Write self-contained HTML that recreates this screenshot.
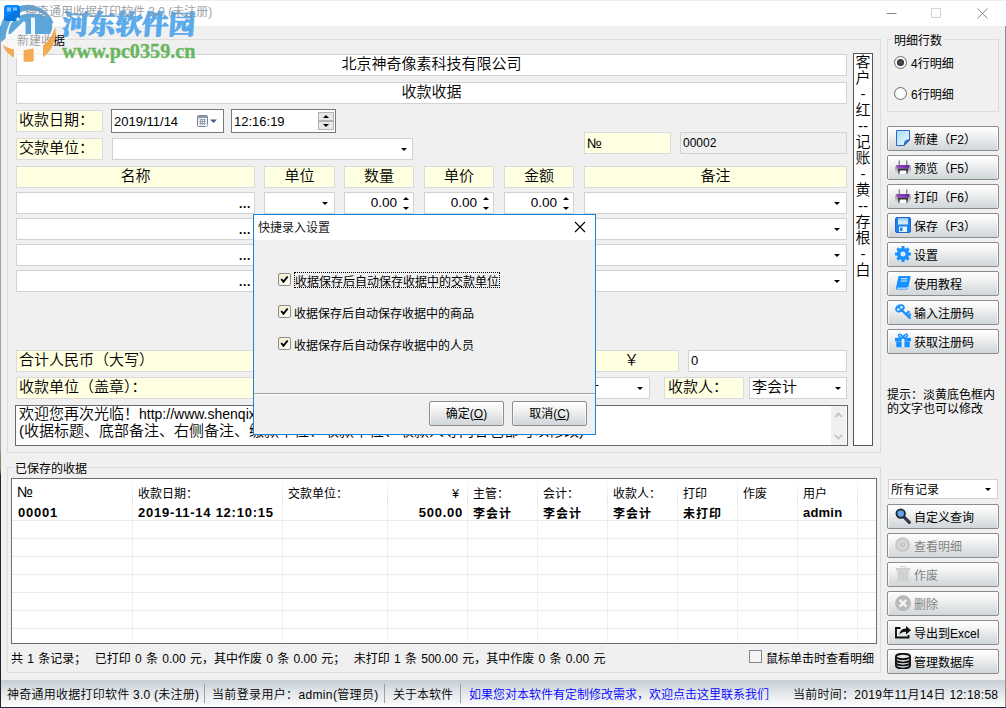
<!DOCTYPE html>
<html lang="zh-CN">
<head>
<meta charset="utf-8">
<title>神奇通用收据打印软件 3.0 (未注册)</title>
<style>
*{box-sizing:border-box;margin:0;padding:0}
html,body{width:1006px;height:708px;overflow:hidden;background:#f0f0f0}
body{position:relative;font-family:"Liberation Sans","Noto Sans CJK SC",sans-serif;font-size:12px;color:#000;line-height:1}
.a{position:absolute;white-space:nowrap}
/* 15px form font (SimSun-like) */
.f15{font-size:15px;font-weight:350;line-height:17px}
.f12{font-size:12px;line-height:14px}
.f13{font-size:13px;line-height:15px}
.yl{background:#ffffe1;border:1px solid #dadada}
.wf{background:#fff;border:1px solid #d2d2d2}
.df{background:#fff;border:1px solid #7a7a7a}
.c{text-align:center}
.r{text-align:right}
.grp{border:1px solid #dcdcdc}
.btn{border:1px solid #8c8c8c;border-radius:2px;background:linear-gradient(#ffffff 0%,#f1f2f2 35%,#dfe2e4 70%,#d0d6da 100%);box-shadow:inset -1px 0 0 rgba(255,255,255,.7),inset 1px 0 0 rgba(255,255,255,.7);height:25px;width:112px;left:887px}
.btn .t{position:absolute;left:26px;top:6px;font-size:12px;line-height:14px}
.btn svg{position:absolute;left:7px;top:3px;width:16px;height:16px}
.btn.dis .t{color:#838383}
.arr{width:0;height:0;border-left:3px solid transparent;border-right:3px solid transparent;border-top:3px solid #000}
.sp{width:6px;height:13px}
.sp:before,.sp:after{content:"";position:absolute;left:0;width:0;height:0;border-left:3px solid transparent;border-right:3px solid transparent}
.sp:before{top:0;border-bottom:3px solid #000}
.sp:after{top:10px;border-top:3px solid #000}
.b{font-weight:700}
.bl{font-size:13px;letter-spacing:.75px}
.cb{width:13px;height:13px}
.dots{font-size:12px;font-weight:700;letter-spacing:.7px}
</style>
</head>
<body>
<!-- ======= title bar ======= -->
<div class="a" id="titlebar" style="left:0;top:0;width:1006px;height:26px;background:#fff"></div>
<div class="a" id="topstrip" style="left:0;top:0;width:1006px;height:1px;background:#eeeeee"></div>
<div class="a" style="left:1005px;top:26px;width:1px;height:682px;background:#8c8c8c"></div>
<div class="a" style="left:0;top:26px;width:1px;height:682px;background:linear-gradient(#a0a0a0 0,#a0a0a0 62%,#8c8468 63%,#8c8468 65%,#1c2333 66%,#1c2333 100%)"></div>
<!-- window controls -->
<svg class="a" style="left:880px;top:0;width:126px;height:26px" viewBox="0 0 126 26">
  <path d="M6.500 13.500h10" stroke="#8a8a8a" stroke-width="1" fill="none"/>
  <rect x="51.5" y="8.5" width="9" height="9" stroke="#d4d4d4" stroke-width="1" fill="none"/>
  <path d="M97.5 8.5l10 10M107.5 8.5l-10 10" stroke="#8a8a8a" stroke-width="1" fill="none"/>
</svg>

<!-- ======= group: 新建收据 ======= -->
<div class="a grp" style="left:7px;top:39px;width:874px;height:414px"></div>
<div class="a f12" style="left:15px;top:34px;padding:0 2px;background:#f0f0f0">新建收据</div>

<div class="a wf f15 c" style="left:16px;top:54px;width:831px;height:22px">北京神奇像素科技有限公司</div>
<div class="a wf f15 c" style="left:16px;top:82px;width:831px;height:22px">收款收据</div>

<div class="a yl f15" style="left:16px;top:110px;width:87px;height:22px;padding-left:2px">收款日期：</div>
<div class="a df f13" style="left:111px;top:109px;width:113px;height:24px;padding:4px 0 0 2px">2019/11/14</div>
<svg class="a" style="left:197px;top:115px;width:22px;height:13px" viewBox="0 0 22 13"><rect x="0.5" y="0.5" width="10" height="11" rx="1" fill="#eef0f4" stroke="#7b8594"/><rect x="1" y="1" width="9" height="2" fill="#8c97a8"/><path d="M2.5 4.5h6M2.5 6.5h6M2.5 8.5h6M3.5 4v6M5.5 4v6M7.5 4v6" stroke="#9aa3b2" stroke-width="1" fill="none"/><path d="M8 12l3-3v3z" fill="#c9ced8"/><path d="M13 4.5h7l-3.5 3.5z" fill="#3e5f8f"/></svg>
<div class="a df f13" style="left:231px;top:109px;width:105px;height:24px;padding:4px 0 0 2px">12:16:19</div>
<div class="a" style="left:318px;top:112px;width:16px;height:9px;background:#e8e8e8;border:1px solid #b4b4b4"></div>
<div class="a" style="left:318px;top:121px;width:16px;height:9px;background:#e8e8e8;border:1px solid #b4b4b4"></div>
<div class="a" style="left:323px;top:115px;width:0;height:0;border-left:3px solid transparent;border-right:3px solid transparent;border-bottom:3px solid #000"></div>
<div class="a" style="left:323px;top:124px;width:0;height:0;border-left:3px solid transparent;border-right:3px solid transparent;border-top:3px solid #000"></div>

<div class="a yl f15" style="left:16px;top:138px;width:87px;height:22px;padding-left:2px">交款单位：</div>
<div class="a wf" style="left:112px;top:138px;width:301px;height:22px"></div>
<div class="a arr" style="left:401px;top:148px"></div>

<div class="a yl f13" style="left:584px;top:132px;width:87px;height:22px;padding:3px 0 0 2px;font-size:14px">№</div>
<div class="a f12" style="left:680px;top:132px;width:167px;height:22px;padding:3px 0 0 2px;background:#f0f0f0;border:1px solid #d2d2d2">00002</div>

<!-- header row -->
<div class="a yl f15 c" style="left:16px;top:166px;width:239px;height:22px">名称</div>
<div class="a yl f15 c" style="left:264px;top:166px;width:71px;height:22px">单位</div>
<div class="a yl f15 c" style="left:344px;top:166px;width:70px;height:22px">数量</div>
<div class="a yl f15 c" style="left:424px;top:166px;width:70px;height:22px">单价</div>
<div class="a yl f15 c" style="left:504px;top:166px;width:70px;height:22px">金额</div>
<div class="a yl f15 c" style="left:584px;top:166px;width:263px;height:22px">备注</div>

<!-- detail rows -->
<div id="rows">
<div class="a wf" style="left:16px;top:192px;width:239px;height:22px"></div>
<div class="a dots" style="left:239px;top:198px">...</div>
<div class="a wf" style="left:264px;top:192px;width:71px;height:22px"></div><div class="a arr" style="left:322px;top:202px"></div>
<div class="a wf f13 r" style="left:344px;top:192px;width:70px;height:22px;padding:2px 16px 0 0;font-size:13.5px">0.00</div><div class="a sp" style="left:403px;top:197px"></div>
<div class="a wf f13 r" style="left:424px;top:192px;width:70px;height:22px;padding:2px 16px 0 0;font-size:13.5px">0.00</div><div class="a sp" style="left:483px;top:197px"></div>
<div class="a wf f13 r" style="left:504px;top:192px;width:70px;height:22px;padding:2px 16px 0 0;font-size:13.5px">0.00</div><div class="a sp" style="left:563px;top:197px"></div>
<div class="a wf" style="left:584px;top:192px;width:263px;height:22px"></div><div class="a arr" style="left:834px;top:202px"></div>
<div class="a wf" style="left:16px;top:218px;width:239px;height:22px"></div>
<div class="a dots" style="left:239px;top:224px">...</div>
<div class="a wf" style="left:264px;top:218px;width:71px;height:22px"></div><div class="a arr" style="left:322px;top:228px"></div>
<div class="a wf f13 r" style="left:344px;top:218px;width:70px;height:22px;padding:2px 16px 0 0;font-size:13.5px">0.00</div><div class="a sp" style="left:403px;top:223px"></div>
<div class="a wf f13 r" style="left:424px;top:218px;width:70px;height:22px;padding:2px 16px 0 0;font-size:13.5px">0.00</div><div class="a sp" style="left:483px;top:223px"></div>
<div class="a wf f13 r" style="left:504px;top:218px;width:70px;height:22px;padding:2px 16px 0 0;font-size:13.5px">0.00</div><div class="a sp" style="left:563px;top:223px"></div>
<div class="a wf" style="left:584px;top:218px;width:263px;height:22px"></div><div class="a arr" style="left:834px;top:228px"></div>
<div class="a wf" style="left:16px;top:244px;width:239px;height:22px"></div>
<div class="a dots" style="left:239px;top:250px">...</div>
<div class="a wf" style="left:264px;top:244px;width:71px;height:22px"></div><div class="a arr" style="left:322px;top:254px"></div>
<div class="a wf f13 r" style="left:344px;top:244px;width:70px;height:22px;padding:2px 16px 0 0;font-size:13.5px">0.00</div><div class="a sp" style="left:403px;top:249px"></div>
<div class="a wf f13 r" style="left:424px;top:244px;width:70px;height:22px;padding:2px 16px 0 0;font-size:13.5px">0.00</div><div class="a sp" style="left:483px;top:249px"></div>
<div class="a wf f13 r" style="left:504px;top:244px;width:70px;height:22px;padding:2px 16px 0 0;font-size:13.5px">0.00</div><div class="a sp" style="left:563px;top:249px"></div>
<div class="a wf" style="left:584px;top:244px;width:263px;height:22px"></div><div class="a arr" style="left:834px;top:254px"></div>
<div class="a wf" style="left:16px;top:270px;width:239px;height:22px"></div>
<div class="a dots" style="left:239px;top:276px">...</div>
<div class="a wf" style="left:264px;top:270px;width:71px;height:22px"></div><div class="a arr" style="left:322px;top:280px"></div>
<div class="a wf f13 r" style="left:344px;top:270px;width:70px;height:22px;padding:2px 16px 0 0;font-size:13.5px">0.00</div><div class="a sp" style="left:403px;top:275px"></div>
<div class="a wf f13 r" style="left:424px;top:270px;width:70px;height:22px;padding:2px 16px 0 0;font-size:13.5px">0.00</div><div class="a sp" style="left:483px;top:275px"></div>
<div class="a wf f13 r" style="left:504px;top:270px;width:70px;height:22px;padding:2px 16px 0 0;font-size:13.5px">0.00</div><div class="a sp" style="left:563px;top:275px"></div>
<div class="a wf" style="left:584px;top:270px;width:263px;height:22px"></div><div class="a arr" style="left:834px;top:280px"></div>
</div>

<!-- totals -->
<div class="a yl f15" style="left:16px;top:350px;width:560px;height:22px;padding-left:2px">合计人民币（大写）</div>
<div class="a yl f15 c" style="left:584px;top:350px;width:95px;height:22px">￥</div>
<div class="a wf f13" style="left:688px;top:350px;width:159px;height:22px;padding:2px 0 0 2px">0</div>

<div class="a yl f15" style="left:16px;top:377px;width:560px;height:22px;padding-left:2px">收款单位（盖章）：</div>
<div class="a wf f15" style="left:551px;top:377px;width:99px;height:22px;padding-left:2px">李会计</div>
<div class="a arr" style="left:637px;top:387px"></div>
<div class="a yl f15" style="left:664px;top:377px;width:80px;height:22px;padding-left:3px">收款人：</div>
<div class="a wf f15" style="left:749px;top:377px;width:98px;height:22px;padding-left:2px">李会计</div>
<div class="a arr" style="left:835px;top:387px"></div>

<!-- notes -->
<div class="a" style="left:15px;top:405px;width:833px;height:41px;background:#fff;border:1px solid #696969"></div>
<div class="a f15" style="left:19px;top:406px;line-height:15px">欢迎您再次光临！<span style="font-size:14px;font-weight:400">http://www.shenqixiangsu.com</span></div>
<div class="a f15" style="left:19px;top:423px;line-height:15px">(收据标题、底部备注、右侧备注、缴款单位、收款单位、收款人等内容也都可以修改)</div>
<div class="a" style="left:831px;top:406px;width:15px;height:39px;background:#f0f0f0"></div>
<svg class="a" style="left:831px;top:406px;width:15px;height:39px" viewBox="0 0 15 39"><path d="M4 11l3.5-3.5 3.5 3.5M4 29l3.5 3.5 3.5-3.5" stroke="#bfbfbf" stroke-width="1.6" fill="none"/></svg>

<!-- vertical side note -->
<div class="a f15 c" style="left:853px;top:53px;width:20px;height:393px;background:#fff;border:1px solid #555;line-height:16px;padding-top:0px">客<br>户<br>-<br>红<br>--<br>记<br>账<br>-<br>黄<br>--<br>存<br>根<br>-<br>白</div>

<!-- ======= right panel ======= -->
<div class="a grp" style="left:887px;top:39px;width:112px;height:73px"></div>
<div class="a f12" style="left:892px;top:34px;padding:0 2px;background:#f0f0f0">明细行数</div>
<div class="a" style="left:894px;top:56px;width:13px;height:13px;border-radius:50%;border:1px solid #6f6f6f;background:radial-gradient(#fff 40%,#e4e4e4)"></div>
<div class="a" style="left:897px;top:59px;width:7px;height:7px;border-radius:50%;background:radial-gradient(#555,#1c1c1c)"></div>
<div class="a f12" style="left:911px;top:57px">4行明细</div>
<div class="a" style="left:894px;top:87px;width:13px;height:13px;border-radius:50%;border:1px solid #6f6f6f;background:radial-gradient(#fff 40%,#e4e4e4)"></div>
<div class="a f12" style="left:911px;top:88px">6行明细</div>

<div class="a btn" style="top:126px"><svg viewBox="0 0 16 16"><defs><linearGradient id="gnew" x1="0" y1="0" x2="1" y2="1"><stop offset="0" stop-color="#9fdcfb"/><stop offset="1" stop-color="#f2fbff"/></linearGradient></defs><path d="M1.5 0.5h13v9.5l-5.5 5.5h-7.5z" fill="url(#gnew)" stroke="#2b66c4"/><path d="M14.5 10c-2.5 0-4 .3-4.300 1.200c-.6 1-.8 2.300-1.200 4.300z" fill="#2f7fe0" stroke="#2456b0" stroke-width=".8"/></svg><span class="t">新建（F2）</span></div>
<div class="a btn" style="top:155px"><svg viewBox="0 0 16 16"><defs><linearGradient id="gpr1" x1="1" y1="0" x2="0" y2="1"><stop offset="0" stop-color="#5a109c"/><stop offset="1" stop-color="#a860d6"/></linearGradient><linearGradient id="gpb1" x1="0" y1="0" x2="0" y2="1"><stop offset="0" stop-color="#8e8e8e"/><stop offset="1" stop-color="#d2d2d2"/></linearGradient></defs><rect x="3.700" y=".5" width="8.600" height="6" fill="#f3f3f3"/><path d="M4.200 1.500v5M11.800 1.500v5" stroke="#5c5c5c" stroke-width="1"/><path d="M0 9.500c0-2.500 1.200-3.500 3-3.500h10c1.800 0 3 1 3 3.500c0 2.800-.8 4.500-2.600 4.500h-10.800c-1.800 0-2.600-1.700-2.600-4.500z" fill="url(#gpb1)"/><path d="M1.200 6.200h13.600l-1.200 3.500h-11.200z" fill="url(#gpr1)"/><path d="M2.800 9.700h10.400l-.9 5.500h-8.600z" fill="#333"/><path d="M4.800 11.500h6.400l.5 4h-7.400z" fill="#fbfbfb"/></svg><span class="t">预览（F5）</span></div>
<div class="a btn" style="top:184px"><svg viewBox="0 0 16 16"><defs><linearGradient id="gpr2" x1="1" y1="0" x2="0" y2="1"><stop offset="0" stop-color="#5a109c"/><stop offset="1" stop-color="#a860d6"/></linearGradient><linearGradient id="gpb2" x1="0" y1="0" x2="0" y2="1"><stop offset="0" stop-color="#8e8e8e"/><stop offset="1" stop-color="#d2d2d2"/></linearGradient></defs><rect x="3.700" y=".5" width="8.600" height="6" fill="#f3f3f3"/><path d="M4.200 1.500v5M11.800 1.500v5" stroke="#5c5c5c" stroke-width="1"/><path d="M0 9.500c0-2.500 1.200-3.500 3-3.500h10c1.800 0 3 1 3 3.500c0 2.800-.8 4.500-2.600 4.500h-10.800c-1.800 0-2.600-1.700-2.600-4.500z" fill="url(#gpb2)"/><path d="M1.200 6.200h13.600l-1.200 3.500h-11.200z" fill="url(#gpr2)"/><path d="M2.800 9.700h10.400l-.9 5.500h-8.600z" fill="#333"/><path d="M4.800 11.500h6.400l.5 4h-7.400z" fill="#fbfbfb"/></svg><span class="t">打印（F6）</span></div>
<div class="a btn" style="top:213px"><svg viewBox="0 0 16 16"><rect x=".5" y=".5" width="15" height="15" rx="1.500" fill="#1c83ea" stroke="#2467c9"/><rect x="3" y="1.500" width="10" height="6" fill="#cfeafc"/><rect x="3" y="1.500" width="10" height="2" fill="#9fd4f8"/><rect x="4" y="9.500" width="8" height="5.500" fill="#e8f4fd"/><rect x="5" y="10.500" width="2.500" height="3.500" fill="#1c83ea"/></svg><span class="t">保存（F3）</span></div>
<div class="a btn" style="top:242px"><svg viewBox="0 0 16 16"><path d="M6.44 2.10 L6.54 0.03 L9.46 0.03 L9.56 2.10 L11.06 2.73 L12.61 1.34 L14.66 3.39 L13.27 4.94 L13.90 6.44 L15.97 6.54 L15.97 9.46 L13.90 9.56 L13.27 11.06 L14.66 12.61 L12.61 14.66 L11.06 13.27 L9.56 13.90 L9.46 15.97 L6.54 15.97 L6.44 13.90 L4.94 13.27 L3.39 14.66 L1.34 12.61 L2.73 11.06 L2.10 9.56 L0.03 9.46 L0.03 6.54 L2.10 6.44 L2.73 4.94 L1.34 3.39 L3.39 1.34 L4.94 2.73Z" fill="#1890ff"/><circle cx="8" cy="8" r="2.500" fill="#e9f1f8"/><circle cx="8" cy="8" r="1.200" fill="#cfe4fa"/></svg><span class="t">设置</span></div>
<div class="a btn" style="top:271px"><svg viewBox="0 0 16 16"><path d="M4.300 1h10.200c.8 0 1.200.6 1 1.400l-2.400 10.600c-.2.900-.8 1.500-1.700 1.500h-9.400c-.9 0-1.200-.7-1-1.500l2-9.800c.2-1.200.5-2.200 1.300-2.200z" fill="#1890ff"/><path d="M6 3.700h6.500M5.600 6h6.500" stroke="#dff0ff" stroke-width="1.100"/><path d="M2.200 13.200h9.800l.6-1.200" stroke="#e8f4ff" stroke-width="1" fill="none"/></svg><span class="t">使用教程</span></div>
<div class="a btn" style="top:300px"><svg viewBox="0 0 16 16"><path d="M7.500 7l7.300 7M11 10.500l2.600-2.600M13.200 12.600l2.200-2.200" stroke="#1890ff" stroke-width="2.300" fill="none" stroke-linecap="round"/><ellipse cx="5" cy="4.300" rx="5" ry="3.900" transform="rotate(-28 5 4.300)" fill="#1890ff"/><circle cx="3.300" cy="5.500" r="1.350" fill="#e6eef6"/><circle cx="6.400" cy="3.300" r="1.350" fill="#e6eef6"/></svg><span class="t">输入注册码</span></div>
<div class="a btn" style="top:329px"><svg viewBox="0 0 16 16"><path d="M8 4.500c-1-3.500-4.500-4-4.500-2s2.500 2 4.500 2zM8 4.500c1-3.500 4.500-4 4.500-2s-2.500 2-4.500 2z" fill="none" stroke="#1890ff" stroke-width="1.500"/><rect x="0" y="4.800" width="16" height="3.600" fill="#1890ff"/><rect x="1.200" y="8.400" width="13.600" height="5.800" rx=".6" fill="#1890ff"/><rect x="6.600" y="5.800" width="2.800" height="8.400" fill="#e6eef6"/></svg><span class="t">获取注册码</span></div>

<div class="a f12" style="left:887px;top:388px;line-height:14px;white-space:normal;width:115px">提示：淡黄底色框内的文字也可以修改</div>

<!-- ======= group: 已保存的收据 ======= -->
<div class="a grp" style="left:7px;top:467px;width:874px;height:206px"></div>
<div class="a f12" style="left:13px;top:462px;padding:0 2px;background:#f0f0f0">已保存的收据</div>
<div class="a" id="grid" style="left:11px;top:478px;width:866px;height:166px;background:#fff;border:1px solid #6d6d6d">
<div class="a" style="left:120px;top:0;width:1px;height:24px;background:linear-gradient(#fff,#e3e3e3)"></div>
<div class="a" style="left:120px;top:24px;width:1px;height:139px;background:#f0f0f0"></div>
<div class="a" style="left:270px;top:0;width:1px;height:24px;background:linear-gradient(#fff,#e3e3e3)"></div>
<div class="a" style="left:270px;top:24px;width:1px;height:139px;background:#f0f0f0"></div>
<div class="a" style="left:375px;top:0;width:1px;height:24px;background:linear-gradient(#fff,#e3e3e3)"></div>
<div class="a" style="left:375px;top:24px;width:1px;height:139px;background:#f0f0f0"></div>
<div class="a" style="left:455px;top:0;width:1px;height:24px;background:linear-gradient(#fff,#e3e3e3)"></div>
<div class="a" style="left:455px;top:24px;width:1px;height:139px;background:#f0f0f0"></div>
<div class="a" style="left:525px;top:0;width:1px;height:24px;background:linear-gradient(#fff,#e3e3e3)"></div>
<div class="a" style="left:525px;top:24px;width:1px;height:139px;background:#f0f0f0"></div>
<div class="a" style="left:595px;top:0;width:1px;height:24px;background:linear-gradient(#fff,#e3e3e3)"></div>
<div class="a" style="left:595px;top:24px;width:1px;height:139px;background:#f0f0f0"></div>
<div class="a" style="left:665px;top:0;width:1px;height:24px;background:linear-gradient(#fff,#e3e3e3)"></div>
<div class="a" style="left:665px;top:24px;width:1px;height:139px;background:#f0f0f0"></div>
<div class="a" style="left:725px;top:0;width:1px;height:24px;background:linear-gradient(#fff,#e3e3e3)"></div>
<div class="a" style="left:725px;top:24px;width:1px;height:139px;background:#f0f0f0"></div>
<div class="a" style="left:785px;top:0;width:1px;height:24px;background:linear-gradient(#fff,#e3e3e3)"></div>
<div class="a" style="left:785px;top:24px;width:1px;height:139px;background:#f0f0f0"></div>
<div class="a" style="left:845px;top:0;width:1px;height:24px;background:linear-gradient(#fff,#e3e3e3)"></div>
<div class="a" style="left:845px;top:24px;width:1px;height:139px;background:#f0f0f0"></div>
<div class="a" style="left:0;top:41px;width:864px;height:1px;background:#ececec"></div>
<div class="a" style="left:0;top:59px;width:864px;height:1px;background:#ececec"></div>
<div class="a" style="left:0;top:77px;width:864px;height:1px;background:#ececec"></div>
<div class="a" style="left:0;top:95px;width:864px;height:1px;background:#ececec"></div>
<div class="a" style="left:0;top:113px;width:864px;height:1px;background:#ececec"></div>
<div class="a" style="left:0;top:131px;width:864px;height:1px;background:#ececec"></div>
<div class="a" style="left:0;top:149px;width:864px;height:1px;background:#ececec"></div>
<div class="a f12" style="left:5px;top:5px;font-size:15px;line-height:15px">№</div>
<div class="a f12" style="left:126px;top:8px">收款日期：</div>
<div class="a f12" style="left:276px;top:8px">交款单位：</div>
<div class="a f12" style="right:417px;top:8px">¥</div>
<div class="a f12" style="left:461px;top:8px">主管：</div>
<div class="a f12" style="left:531px;top:8px">会计：</div>
<div class="a f12" style="left:601px;top:8px">收款人：</div>
<div class="a f12" style="left:671px;top:8px">打印</div>
<div class="a f12" style="left:731px;top:8px">作废</div>
<div class="a f12" style="left:791px;top:8px">用户</div>
<div class="a f12 b bl" style="left:6px;top:27px">00001</div>
<div class="a f12 b bl" style="left:126px;top:27px">2019-11-14 12:10:15</div>
<div class="a f12 b bl" style="right:413px;top:27px">500.00</div>
<div class="a f12 b" style="left:461px;top:28px;letter-spacing:1px">李会计</div>
<div class="a f12 b" style="left:531px;top:28px;letter-spacing:1px">李会计</div>
<div class="a f12 b" style="left:601px;top:28px;letter-spacing:1px">李会计</div>
<div class="a f12 b" style="left:671px;top:28px;letter-spacing:1px">未打印</div>
<div class="a f12 b bl" style="left:791px;top:27px;letter-spacing:.2px">admin</div>
</div>

<div class="a" style="left:888px;top:479px;width:110px;height:20px;background:#fff;border:1px solid #d2d2d2"></div>
<div class="a f12" style="left:891px;top:483px">所有记录</div>
<div class="a arr" style="left:985px;top:488px"></div>
<div class="a btn" style="top:504px"><svg viewBox="0 0 16 16"><path d="M9.300 9.300l5 5" stroke="#2c3a4a" stroke-width="3.200" stroke-linecap="round"/><circle cx="5.700" cy="5.600" r="4.300" fill="#5b9bea" stroke="#1c242e" stroke-width="1.700"/><circle cx="5.200" cy="5" r="1.800" fill="#6aa8f0"/></svg><span class="t">自定义查询</span></div>
<div class="a btn dis" style="top:533px"><svg viewBox="0 0 16 16"><circle cx="7.600" cy="7.800" r="7.500" fill="#c9c9c9"/><circle cx="7.600" cy="7.800" r="4.800" fill="#dcdcdc"/><circle cx="7.600" cy="7.800" r="2.600" fill="#c2c2c2"/><circle cx="8" cy="7.400" r=".8" fill="#e8e8e8"/></svg><span class="t">查看明细</span></div>
<div class="a btn dis" style="top:562px"><svg viewBox="0 0 16 16"><path d="M5.500 0.500h5v2h-5z" fill="none" stroke="#d4d4d4" stroke-width="1"/><rect x="1" y="2" width="14" height="2.200" fill="#cdcdcd"/><path d="M2 4.200h12v11h-12z" fill="#d6d6d6"/><path d="M5 5v9.500M8 5v9.500M11 5v9.500" stroke="#c6c6c6" stroke-width="1"/><rect x=".5" y="14.800" width="15" height=".9" fill="#cfcfcf"/></svg><span class="t">作废</span></div>
<div class="a btn dis" style="top:591px"><svg viewBox="0 0 16 16"><circle cx="8" cy="8.200" r="7.900" fill="#b9b9b9"/><path d="M4.600 4.800l6.800 6.800M11.400 4.800l-6.800 6.800" stroke="#f2f2f2" stroke-width="2.600"/></svg><span class="t">删除</span></div>
<div class="a btn" style="top:620px"><svg viewBox="0 0 16 16"><path d="M5.500 4h-4.500v9.500h12.500v-2.500" fill="none" stroke="#111" stroke-width="1.900"/><path d="M4.500 10.500c.3-3.500 2.500-5.700 6.500-5.900v-2.600l5 4.200l-5 4.200v-2.700c-2.800-.1-4.800.6-6.500 2.800z" fill="#111"/></svg><span class="t">导出到Excel</span></div>
<div class="a btn" style="top:649px"><svg viewBox="0 0 16 16"><path d="M.9 3.500v9c0 1.700 3.200 3 7.100 3s7.100-1.300 7.100-3v-9" fill="#d9dde2" stroke="#111" stroke-width="1.700"/><ellipse cx="8" cy="3.500" rx="7.100" ry="2.700" fill="#e4e7ea" stroke="#111" stroke-width="1.700"/><path d="M.9 6.500c0 1.700 3.200 3 7.100 3s7.100-1.300 7.100-3M.9 9.500c0 1.700 3.200 3 7.100 3s7.100-1.300 7.100-3" fill="none" stroke="#111" stroke-width="1.700"/></svg><span class="t">管理数据库</span></div>

<div class="a f12" style="left:11px;top:652px;font-size:12px;white-space:pre;word-spacing:.95px">共 1 条记录；  已打印 0 条 0.00 元，其中作废 0 条 0.00 元；  未打印 1 条 500.00 元，其中作废 0 条 0.00 元</div>
<div class="a" style="left:749px;top:650px;width:13px;height:13px;background:#f4f4f4;border:1px solid #868686"></div>
<div class="a f12" style="left:766px;top:652px">鼠标单击时查看明细</div>

<!-- ======= status bar ======= -->
<div class="a" id="status" style="left:1px;top:680px;width:1004px;height:27px;background:linear-gradient(#c6cdd4 0%,#dfe3e7 40%,#fdfdfd 100%)"></div>
<div class="a" style="left:0;top:707px;width:1006px;height:1px;background:#1d2b45"></div>
<div class="a" style="left:0;top:680px;width:1px;height:28px;background:#222"></div>
<div class="a" style="left:204px;top:684px;width:1px;height:19px;background:#9aa0a6"></div><div class="a" style="left:384px;top:684px;width:1px;height:19px;background:#9aa0a6"></div><div class="a" style="left:460px;top:684px;width:1px;height:19px;background:#9aa0a6"></div>
<div class="a" style="left:7px;top:687px;font-size:12px;line-height:16px;font-weight:350;letter-spacing:.25px">神奇通用收据打印软件 3.0 (未注册)</div>
<div class="a" style="left:212px;top:687px;font-size:12px;line-height:16px;font-weight:350;letter-spacing:.35px">当前登录用户：admin(管理员)</div>
<div class="a" style="left:393px;top:687px;font-size:12px;line-height:16px;font-weight:350">关于本软件</div>
<div class="a" style="left:469px;top:687px;font-size:12px;line-height:16px;font-weight:350;color:#0000ff">如果您对本软件有定制修改需求，欢迎点击这里联系我们</div>
<div class="a" style="left:793px;top:687px;font-size:12px;line-height:16px;font-weight:350;letter-spacing:.27px">当前时间：2019年11月14日 12:18:58</div>

<!-- ======= watermark ======= -->
<svg class="a" id="wm" style="left:0;top:0;width:210px;height:70px" viewBox="0 0 210 70">
  <circle cx="28" cy="34" r="27.500" fill="#ffffff" opacity=".6"/>
  <path d="M1.500 42A27.500 27.500 0 0 1 53.500 23L51.500 23.500C46 13.500 36.500 9.500 27 10.500C15 12 7 22 5.500 38.500Z" fill="#4a9cd6" opacity=".9"/>
  <path d="M8.500 34C8.500 24 15 15.500 26.500 13.800C38 12.300 48 15.500 51.500 22C53 26 52.300 30.500 50 34Z" fill="#4a9cd6" opacity=".9"/>
  <path d="M24 21L10.500 34L25.500 34L25.500 22.500Z" fill="#ffffff" opacity=".93"/>
  <path d="M31 17.500h4v16.500h-4z" fill="#ffffff" opacity=".9"/>
  <path d="M3 45C6 47 10 48.500 14 49.500L14 57.500C9 55 5 51 3 45Z" fill="#f2a444" opacity=".92"/>
  <path d="M23.600 50.200L33.700 48.500L33.700 61C30 62 27 62 23.600 61.500Z" fill="#f2a444" opacity=".92"/>
  <path d="M43 45.500C48 42 52 36 55 27C57.500 36 55 48 43 57.500Z" fill="#f2a444" opacity=".92"/>
  <text x="61.500" y="34.500" font-family="'Liberation Serif','Noto Serif CJK SC',serif" font-weight="900" font-size="27" fill="#4aa2ea" stroke="#4aa2ea" stroke-width=".9" stroke-linejoin="round" opacity=".9" transform="translate(0 34.500) skewX(-4) translate(0 -34.500)" textLength="133" lengthAdjust="spacingAndGlyphs">河东软件园</text>
  <text x="62" y="57.500" font-family="'Liberation Serif',serif" font-weight="700" font-size="20" fill="#5bb050" stroke="#5bb050" stroke-width=".35" opacity=".9" textLength="133.500" lengthAdjust="spacingAndGlyphs">www.pc0359.cn</text>
</svg>

<div class="a" id="ttl" style="left:25px;top:4px;font-size:12px;line-height:16px;color:#8f959b;opacity:.85">神奇通用收据打印软件 3.0 (未注册)</div>
<svg class="a" id="appicon" style="left:4px;top:5px;width:17px;height:17px" viewBox="0 0 17 17"><rect x="0" y="0" width="16" height="16" rx="3" fill="#0a84ff"/><path d="M0 13L16 3v10a3 3 0 0 1-3 3h-10a3 3 0 0 1-3-3z" fill="#0676e0"/><rect x="3" y="2.500" width="4" height="4" fill="#9fd0ff" opacity=".8"/><rect x="9" y="2.500" width="4" height="3" fill="#9fd0ff" opacity=".8"/><path d="M14 11.500l.8 1.700 1.900.2-1.400 1.300.4 1.900-1.700-1-1.700 1 .4-1.900-1.400-1.300 1.900-.2z" fill="#d8ecff"/></svg>
<!-- ======= modal dialog ======= -->
<div class="a" id="dlg" style="left:253px;top:214px;width:343px;height:221px;background:#f0f0f0;border:1px solid #1883d7">
  <div class="a" style="left:0;top:0;width:341px;height:25px;background:#fff"></div>
  <div class="a" style="left:4px;top:6px;font-size:12px;line-height:14px;color:#1a1a1a">快捷录入设置</div>
  <svg class="a" style="left:320px;top:6px;width:12px;height:12px" viewBox="0 0 12 12"><path d="M1 1l10 10M11 1l-10 10" stroke="#000" stroke-width="1.1" fill="none"/></svg>
  <svg class="a cb" style="left:24px;top:58px" viewBox="0 0 13 13"><defs><linearGradient id="cg0" x1="0" y1="0" x2="1" y2="1"><stop offset="0" stop-color="#f3e9c0"/><stop offset="1" stop-color="#ffffff"/></linearGradient></defs><rect x="0.5" y="0.5" width="12" height="12" rx="1.5" fill="url(#cg0)" stroke="#8e8f8f"/><path d="M3.200 6l2.300 2.700 4.200-5.200" stroke="#000" stroke-width="1.900" fill="none"/></svg><div class="a f12" style="left:40px;top:57px;border:1px dotted #000;height:16px;padding:2px 0 0 0;line-height:14px;overflow:hidden">收据保存后自动保存收据中的交款单位</div>
  <svg class="a cb" style="left:24px;top:90px" viewBox="0 0 13 13"><defs><linearGradient id="cg1" x1="0" y1="0" x2="1" y2="1"><stop offset="0" stop-color="#f3e9c0"/><stop offset="1" stop-color="#ffffff"/></linearGradient></defs><rect x="0.5" y="0.5" width="12" height="12" rx="1.5" fill="url(#cg1)" stroke="#8e8f8f"/><path d="M3.200 6l2.300 2.700 4.200-5.200" stroke="#000" stroke-width="1.900" fill="none"/></svg><div class="a f12" style="left:40px;top:92px">收据保存后自动保存收据中的商品</div>
  <svg class="a cb" style="left:24px;top:122px" viewBox="0 0 13 13"><defs><linearGradient id="cg2" x1="0" y1="0" x2="1" y2="1"><stop offset="0" stop-color="#f3e9c0"/><stop offset="1" stop-color="#ffffff"/></linearGradient></defs><rect x="0.5" y="0.5" width="12" height="12" rx="1.5" fill="url(#cg2)" stroke="#8e8f8f"/><path d="M3.200 6l2.300 2.700 4.200-5.200" stroke="#000" stroke-width="1.900" fill="none"/></svg><div class="a f12" style="left:40px;top:124px">收据保存后自动保存收据中的人员</div>
  <div class="a" style="left:0;top:178px;width:341px;height:1px;background:#a0a0a0"></div>
  <div class="a" style="left:0;top:179px;width:341px;height:1px;background:#fff"></div>
  <div class="a btn c" style="left:175px;top:186px;width:75px;height:25px;padding-top:5px;line-height:14px">确定(<u>O</u>)</div>
  <div class="a btn c" style="left:258px;top:186px;width:75px;height:25px;padding-top:5px;line-height:14px">取消(<u>C</u>)</div>
</div>

</body>
</html>
